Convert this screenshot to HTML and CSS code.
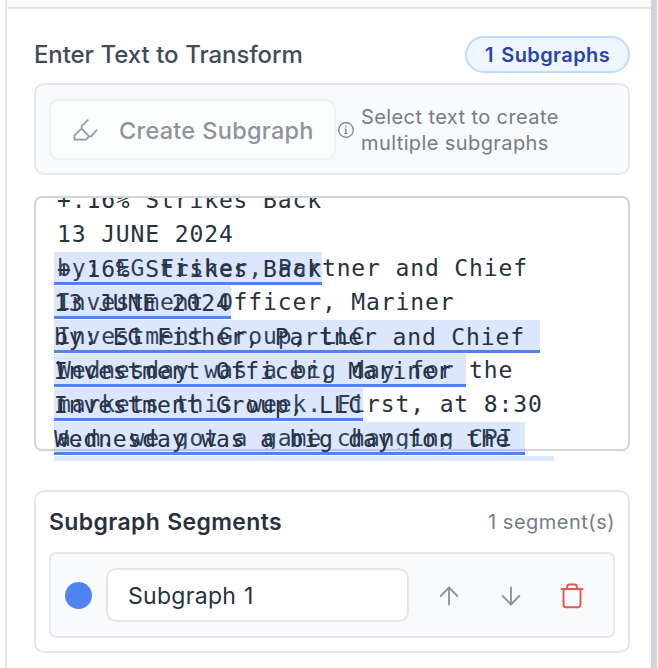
FILE: index.html
```html
<!DOCTYPE html>
<html lang="en">
<head>
<meta charset="utf-8">
<title>Subgraph editor</title>
<link rel="stylesheet" href="styles.css">
</head>
<body>
<main class="panel">
  <div class="panel-top"></div>
  <section class="content">
    <header class="heading">
      <h1><span>Enter Text to Transform</span></h1>
      <span class="badge"><span>1 Subgraphs</span></span>
    </header>
    <div class="toolbar">
      <button class="create" disabled>
        <svg width="26" height="26" viewBox="0 0 26 26"><path d="M15.8 3.2 9.6 9.2V11.6L2.5 18.3v4.3h11.3l3.3-3.3h2l5.6-6.2M9.6 11.6l7.5 7.7"/></svg>
        <span>Create Subgraph</span>
      </button>
      <svg class="info" width="18" height="18" viewBox="0 0 18 18"><circle cx="9" cy="9" r="7.3"/><path d="M9 8.2v4M9 5.3v.7M8.2 8.2H9M8 12.3h2"/></svg>
      <p class="hint">Select text to create<br>multiple subgraphs</p>
    </div>
    <div class="editor">
      <div class="source">+.16% Strikes Back
13 JUNE 2024
by: EG Fisher, Partner and Chief
Investment Officer, Mariner
Investment Group, LLC
Wednesday was a big day for the
markets this week. First, at 8:30
a.m. we got a game changing CPI</div>
      <div class="highlights"><div><mark class="first">+.16% Strikes Back</mark></div><div><mark>13 JUNE 2024</mark></div><div><mark>by: EG Fisher, Partner and Chief </mark></div><div><mark>Investment Officer, Mariner </mark></div><div><mark>Investment Group, LLC</mark></div><div><mark>Wednesday was a big day for the </mark></div><div><mark>markets this week. First, at 8:30 </mark></div></div>
    </div>
    <section class="segments">
      <header class="segments-head">
        <h2>Subgraph Segments</h2>
        <span class="count">1 segment(s)</span>
      </header>
      <div class="segment">
        <span class="dot"></span>
        <div class="name"><span>Subgraph 1</span></div>
        <svg class="arrow" width="24" height="24" viewBox="0 0 24 24"><path d="M12 20.5V3.5M3.7 12 12 3.5l8.3 8.5"/></svg>
        <svg class="arrow" width="24" height="24" viewBox="0 0 24 24"><path d="M12 3.5v17M3.7 12l8.3 8.5 8.3-8.5"/></svg>
        <svg class="trash" width="24" height="26" viewBox="0 0 24 26"><path d="M1.5 6h21M3.5 6v15.8q0 2.5 2.5 2.5h12q2.5 0 2.5-2.5V6M7.2 6V3.7q0-2.2 2.2-2.2h5.2q2.2 0 2.2 2.2V6"/></svg>
      </div>
    </section>
  </section>
</main>
</body>
</html>
```
FILE: styles.css
```css
* { box-sizing: border-box; }
body { margin: 0; background: #fff; font-family: Inter, sans-serif; overflow: hidden; }
h1, h2, p { margin: 0; }
svg { display: block; fill: none; stroke-linecap: round; stroke-linejoin: round; flex: none; }
.panel { height: 668px; width: 652px; margin-left: 5px; border-left: 2px solid #e5e7eb; border-right: 6px solid #d1d5db; }
.panel-top { height: 9px; background: #f8fafc; border-bottom: 2px solid #e5e7eb; }
.content { padding: 27px 21px 0 27px; }
.heading { display: flex; justify-content: space-between; align-items: center; height: 37px; }
h1 { font-size: 24px; font-weight: 500; letter-spacing: -.1px; word-spacing: .5px; color: #414b5c; white-space: nowrap; }
.badge { height: 37px; width: 165px; display: flex; align-items: center; justify-content: center; border: 2px solid #bfdbfe; border-radius: 19px; background: #eff6ff; color: #2a43ad; font-size: 20px; font-weight: 600; letter-spacing: .4px; word-spacing: 2px; white-space: nowrap; }
.toolbar { margin-top: 10px; height: 92px; padding: 1px 13px 0; display: flex; align-items: center; border: 2px solid #e5e7eb; border-radius: 10px; background: #f8fafc; }
.create { width: 287px; height: 61px; padding: 0 0 0 21px; display: flex; align-items: center; gap: 21px; border: 2px solid #f0f1f1; border-radius: 10px; background: #fcfefe; color: #8e939c; font: 500 23.5px Inter, sans-serif; letter-spacing: .25px; word-spacing: .5px; white-space: nowrap; }
.create span { padding-top: 1px; }
.create svg { stroke: #969ba4; stroke-width: 1.8; }
.info { margin-left: 1px; stroke: #747c89; stroke-width: 1.2; }
.hint { margin-left: 6px; padding-top: 1px; color: #747c89; font-size: 20px; line-height: 26px; letter-spacing: .4px; white-space: nowrap; }
.editor { position: relative; margin-top: 21px; height: 255px; border: 2px solid #d1d5db; border-radius: 8px; font: 23px/34px "DejaVu Sans Mono", monospace; letter-spacing: .87px; color: #27313f; }
.source { height: 251px; overflow: hidden; padding-left: 21px; white-space: pre; }
.source::before { content: ""; display: block; margin-top: -15px; }
.highlights { position: absolute; left: 18px; top: 54px; height: 209px; overflow: hidden; white-space: pre; }
.highlights div { height: 34px; }
mark { display: inline-block; height: 33px; line-height: 34px; color: inherit; background: rgba(79, 131, 241, .2); border-bottom: 3px solid #4f83f1; background-clip: padding-box; }
.first { padding-left: 3px; }
.segments { margin-top: 39px; height: 163px; padding: 13px; border: 2px solid #e5e7eb; border-radius: 10px; }
.segments-head { height: 34px; display: flex; align-items: center; justify-content: space-between; white-space: nowrap; }
h2 { font-size: 23px; font-weight: 600; letter-spacing: .35px; word-spacing: 1px; color: #273142; }
.count { color: #747c89; font-size: 20px; letter-spacing: .5px; }
.segment { margin-top: 13px; height: 86px; padding: 0 28px 0 14px; display: flex; align-items: center; border: 2px solid #e5e7eb; border-radius: 7px; background: #f8fafc; }
.dot { width: 27px; height: 27px; border-radius: 50%; background: #4f83f1; flex: none; }
.name { width: 303px; height: 54px; margin-left: 14px; padding: 2px 0 0 20px; display: flex; align-items: center; border: 2px solid #e7e5e4; border-radius: 10px; background: #fff; color: #273142; font-size: 23px; letter-spacing: .3px; word-spacing: 1px; flex: none; white-space: nowrap; }
.arrow { margin: 1px 0 0 28px; stroke: #90949d; stroke-width: 1.9; }
.arrow + .arrow { margin-left: 38px; }
.trash { margin: 1px 0 0 37px; stroke: #e45750; stroke-width: 1.9; }
```
